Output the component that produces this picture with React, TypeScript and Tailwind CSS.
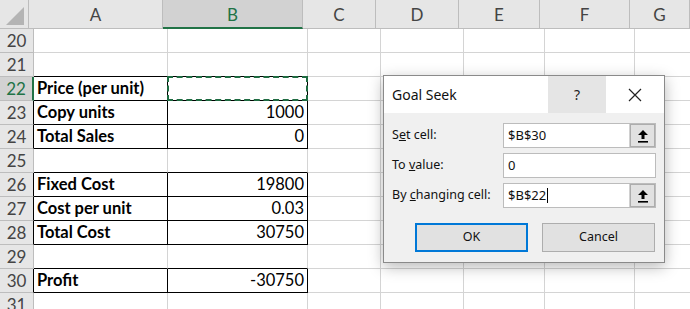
import React from "react"

// ширины колонок, включая правую линию сетки
const cols = [
  { key: "A", w: 134 },
  { key: "B", w: 140 },
  { key: "C", w: 73 },
  { key: "D", w: 83 },
  { key: "E", w: 81 },
  { key: "F", w: 90 },
  { key: "G", w: 60 },
]

type Row = { n: number; a?: string; b?: string; boxed?: boolean; topBoxed?: boolean }

const rows: Row[] = [
  { n: 20 },
  { n: 21, topBoxed: true },
  { n: 22, a: "Price (per unit)", b: "", boxed: true },
  { n: 23, a: "Copy units", b: "1000", boxed: true },
  { n: 24, a: "Total Sales", b: "0", boxed: true },
  { n: 25, topBoxed: true },
  { n: 26, a: "Fixed Cost", b: "19800", boxed: true },
  { n: 27, a: "Cost per unit", b: "0.03", boxed: true },
  { n: 28, a: "Total Cost", b: "30750", boxed: true },
  { n: 29, topBoxed: true },
  { n: 30, a: "Profit", b: "-30750", boxed: true },
  { n: 31 },
]

function UpIcon() {
  return (
    <svg width="12" height="14" viewBox="0 0 12 14">
      <path d="M6 1 L11 6 L7.5 6 L7.5 10 L4.5 10 L4.5 6 L1 6 Z" fill="#000" />
      <rect x="1" y="12" width="10" height="1.6" fill="#000" />
    </svg>
  )
}

function Field({ value, cursor, ref }: { value: string; cursor?: boolean; ref?: boolean }) {
  return (
    <div className="flex h-[25px] w-[153px] border border-[#bcbcbc] bg-white">
      <div className="flex flex-1 items-center pl-[4px] text-[13px] text-[#111]">
        {value}
        {cursor && <span className="ml-[1px] inline-block h-[15px] w-px bg-black" />}
      </div>
      {ref && (
        <div className="flex w-[26px] items-center justify-center border-l border-[#d0d0d0] bg-[#e1e1e1] shadow-[inset_0_0_0_1px_#adadad]">
          <UpIcon />
        </div>
      )}
    </div>
  )
}

function GoalSeek() {
  return (
    <div className="absolute left-[383px] top-[75px] w-[282px] border border-[#8a8a8a] bg-[#f0f0f0] font-['Noto_Sans',sans-serif] shadow-[0_4px_14px_rgba(0,0,0,0.28)]">
      {/* заголовок */}
      <div className="flex h-[37px] items-stretch bg-white">
        <div className="flex flex-1 items-center pl-[8px] text-[14px] text-[#111]">Goal Seek</div>
        <div className="flex w-[58px] items-center justify-center bg-[#e5e5e5] text-[14px] text-[#222]">?</div>
        <div className="flex w-[58px] items-center justify-center">
          <svg width="14" height="14" viewBox="0 0 14 14">
            <path d="M1 1 L13 13 M13 1 L1 13" stroke="#222" strokeWidth="1.2" />
          </svg>
        </div>
      </div>
      {/* поля */}
      <div className="flex flex-col gap-[5px] px-[8px] pt-[10px] text-[12.5px] text-[#111]">
        <div className="flex items-center justify-between">
          <span>S<u>e</u>t cell:</span>
          <Field value="$B$30" ref />
        </div>
        <div className="flex items-center justify-between">
          <span>To <u>v</u>alue:</span>
          <Field value="0" />
        </div>
        <div className="flex items-center justify-between">
          <span>By <u>c</u>hanging cell:</span>
          <Field value="$B$22" cursor ref />
        </div>
      </div>
      {/* кнопки */}
      <div className="flex justify-between pb-[10px] pl-[31px] pr-[9px] pt-[15px] text-[12.5px] text-[#111]">
        <div className="flex h-[29px] w-[113px] items-center justify-center border-2 border-[#0078d7] bg-[#e1e1e1]">OK</div>
        <div className="flex h-[29px] w-[113px] items-center justify-center border border-[#adadad] bg-[#e1e1e1]">Cancel</div>
      </div>
    </div>
  )
}

export default function App() {
  return (
    <div className="relative h-[309px] w-[690px] overflow-hidden bg-white font-['Lato',sans-serif]">
      {/* заголовки колонок */}
      <div className="flex h-[29px]">
        <div className="relative w-[34px] border-b border-r border-[#bdbdbd] bg-[#e6e6e6]">
          <div className="absolute bottom-[3px] right-[4px] h-0 w-0 border-b-[18px] border-l-[18px] border-b-[#b4b4b4] border-l-transparent" />
        </div>
        {cols.map((c) =>
          c.key === "B" ? (
            <div
              key={c.key}
              style={{ width: c.w }}
              className="flex shrink-0 items-center justify-center border-b-2 border-r border-b-[#217346] border-r-[#bdbdbd] bg-[#d2d2d2] pt-[2px] text-[17px] text-[#217346]"
            >
              {c.key}
            </div>
          ) : (
            <div
              key={c.key}
              style={{ width: c.w }}
              className="flex shrink-0 items-center justify-center border-b border-r border-[#bdbdbd] bg-[#e6e6e6] pt-[1px] text-[17px] text-[#444]"
            >
              {c.key}
            </div>
          )
        )}
      </div>

      {/* строки */}
      {rows.map((r, i) => {
        const next = rows[i + 1]
        const bottomBlack = r.boxed || r.topBoxed || (next && next.boxed)
        const sel = r.n === 22
        return (
          <div key={r.n} className="flex h-[24px]">
            <div
              className={
                sel
                  ? "flex w-[34px] shrink-0 items-center justify-center border-b border-r-2 border-b-[#bdbdbd] border-r-[#217346] bg-[#d2d2d2] text-[17px] text-[#217346]"
                  : r.boxed
                  ? "flex w-[34px] shrink-0 items-center justify-center border-b border-r border-b-[#bdbdbd] border-r-black bg-[#e6e6e6] text-[17px] text-[#444]"
                  : "flex w-[34px] shrink-0 items-center justify-center border-b border-r border-[#bdbdbd] bg-[#e6e6e6] text-[17px] text-[#444]"
              }
            >
              {r.n}
            </div>
            <div
              className={
                "flex w-[134px] shrink-0 items-center border-b border-r pl-[3px] text-[16.5px] font-bold text-black " +
                (bottomBlack ? "border-b-black " : "border-b-[#d4d4d4] ") +
                (r.boxed ? "border-r-black" : "border-r-[#d4d4d4]")
              }
            >
              {r.a}
            </div>
            <div
              className={
                "relative flex w-[140px] shrink-0 items-center justify-end border-b border-r pr-[3px] text-[16.5px] text-black " +
                (bottomBlack ? "border-b-black " : "border-b-[#d4d4d4] ") +
                (r.boxed ? "border-r-black" : "border-r-[#d4d4d4]")
              }
            >
              {r.b}
              {sel && (
                <div className="absolute -left-[1px] -right-[1px] -top-[1px] bottom-[-1px] border-[2.5px] border-dashed border-[#1e6b41]" />
              )}
            </div>
            {cols.slice(2).map((c) => (
              <div
                key={c.key}
                style={{ width: c.w }}
                className="shrink-0 border-b border-r border-[#d4d4d4]"
              />
            ))}
          </div>
        )
      })}

      <GoalSeek />
    </div>
  )
}
